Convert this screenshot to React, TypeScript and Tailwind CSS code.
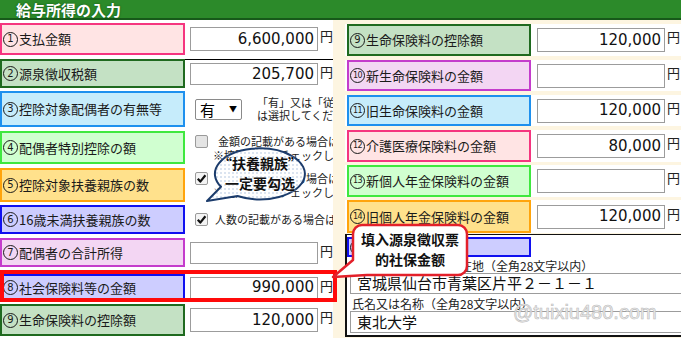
import React from 'react';

type Tone = string;

function Num({ n }: { n: number }) {
  const two = n > 9;
  return (
    <span
      className={`inline-flex items-center justify-center w-[15px] h-[15px] shrink-0 rounded-full border border-[#1a1a1a] mr-[1px] leading-none font-['DejaVu_Sans',sans-serif] ${two ? 'text-[8px] tracking-[-0.6px]' : 'text-[10px]'}`}
    >
      {n}
    </span>
  );
}

function Label({ tone, w = 'w-[185px]', n, children }: { tone: Tone; w?: string; n: number; children: React.ReactNode }) {
  return (
    <div className={`${w} h-full shrink-0 border-2 flex items-center pl-[1px] text-[13px] text-[#1a1a1a] whitespace-nowrap ${tone}`}>
      <Num n={n} />
      {children}
    </div>
  );
}

function Amount({ value = '', h = 'h-[24px]' }: { value?: string; h?: string }) {
  return (
    <div className="flex items-start">
      <div className={`w-[128px] ${h} bg-white border border-[#9c9c9c] flex items-center justify-end pr-[3px] font-['DejaVu_Sans',sans-serif] text-[15px] text-[#111]`}>
        {value}
      </div>
      <span className="ml-[2px] mt-[1px] text-[13px] leading-[16px] text-[#222]">円</span>
    </div>
  );
}

function Check({ checked }: { checked?: boolean }) {
  return (
    <div className={`w-[13px] h-[13px] shrink-0 border border-[#9a9a9a] rounded-[2px] flex items-center justify-center ${checked ? 'bg-[#f4f4f4]' : 'bg-[#e4e4e4]'}`}>
      {checked && (
        <svg width="11" height="11" viewBox="0 0 11 11">
          <path d="M1.8 5.8 L4.3 8.6 L9.4 2.2" fill="none" stroke="#111" strokeWidth="2.2" strokeLinejoin="round" />
        </svg>
      )}
    </div>
  );
}

const tones = {
  pink: 'bg-[#ffe4e4] border-[#f5357f]',
  dgreen: 'bg-[#c4e1c4] border-[#1f6a1f]',
  blue: 'bg-[#c6ecfb] border-[#1e90ee]',
  lgreen: 'bg-[#d0ffd0] border-[#3fe83f]',
  orange: 'bg-[#ffe18c] border-[#ffa40c]',
  violet: 'bg-[#cdcdff] border-[#1010f0]',
  magenta: 'bg-[#f3d6f3] border-[#c43ccc]',
};

export default function App() {
  return (
    <div className="relative w-[681px] h-[338px] overflow-hidden bg-[#fdf5e1] font-['Noto_Sans_CJK_JP','Noto_Sans',sans-serif]">
      {/* header */}
      <div className="h-[20px] bg-[#2c8a2a] border-b-2 border-[#17591a] flex items-center pl-[16px]">
        <span className="text-[15px] font-bold text-white leading-none [text-shadow:0_0_2px_#0d4d10]">給与所得の入力</span>
      </div>

      <div className="flex">
        {/* left panel */}
        <div className="w-[333px] h-[318px] bg-white flex flex-col overflow-hidden">
          <div className="mt-[3px] h-[32px] flex">
            <Label n={1} tone={tones.pink}>支払金額</Label>
            <div className="flex-1 flex items-center pl-[5px]"><Amount value="6,600,000" /></div>
          </div>
          <div className="mt-[4px] h-[29px] flex">
            <Label n={2} tone={tones.dgreen}>源泉徴収税額</Label>
            <div className="flex-1 flex items-center pl-[5px] border-t border-black"><Amount value="205,700" h="h-[22px]" /></div>
          </div>
          <div className="mt-[3px] h-[36px] flex">
            <Label n={3} tone={tones.blue}>控除対象配偶者の有無等</Label>
            <div className="flex-1 min-w-0 flex items-center pl-[10px] whitespace-nowrap overflow-hidden">
              <div className="w-[47px] h-[21px] shrink-0 bg-white border border-[#8a8a8a] rounded-[2px] flex items-center justify-between px-[4px]">
                <span className="text-[15px] leading-none">有</span>
                <span className="text-[8px] leading-none">▼</span>
              </div>
              <div className="ml-[15px] text-[11px] leading-[13px] text-[#222]">
                <div>「有」又は「従有」を選択</div>
                <div>は選択してください。</div>
              </div>
            </div>
          </div>
          <div className="mt-[4px] h-[33px] flex">
            <Label n={4} tone={tones.lgreen}>配偶者特別控除の額</Label>
            <div className="flex-1 min-w-0 flex items-start pt-[3px] pl-[10px] whitespace-nowrap overflow-hidden">
              <div className="mt-[1px]"><Check /></div>
              <div className="ml-[10px] text-[11px] leading-[14px] text-[#222]">
                <div>金額の記載がある場合はチェック</div>
                <div className="-ml-[5px]">※控除の時はチェックしません</div>
              </div>
            </div>
          </div>
          <div className="mt-[4px] h-[34px] flex">
            <Label n={5} tone={tones.orange}>控除対象扶養親族の数</Label>
            <div className="flex-1 min-w-0 flex items-start pt-[3px] pl-[10px] whitespace-nowrap overflow-hidden">
              <div className="mt-[1px]"><Check checked /></div>
              <div className="ml-[10px] text-[11px] leading-[14px] text-[#222]">
                <div>人数の記載がある場合はチェック</div>
                <div className="-ml-[5px]">※控除の時はチェックしません</div>
              </div>
            </div>
          </div>
          <div className="mt-[3px] h-[29px] flex">
            <Label n={6} tone={tones.violet}>16歳未満扶養親族の数</Label>
            <div className="flex-1 min-w-0 flex items-center pl-[10px] whitespace-nowrap overflow-hidden">
              <Check checked />
              <span className="ml-[7px] text-[11px] text-[#222]">人数の記載がある場合はチェック</span>
            </div>
          </div>
          <div className="mt-[4px] h-[29px] flex">
            <Label n={7} tone={tones.magenta}>配偶者の合計所得</Label>
            <div className="flex-1 flex items-center pl-[5px]"><Amount h="h-[22px]" /></div>
          </div>
          <div className="mt-[7px] h-[27px] flex">
            <Label n={8} tone={tones.violet}>社会保険料等の金額</Label>
            <div className="flex-1 flex items-center pl-[5px]"><Amount value="990,000" h="h-[22px]" /></div>
          </div>
          <div className="mt-[3px] h-[32px] flex">
            <Label n={9} tone={tones.dgreen}>生命保険料の控除額</Label>
            <div className="flex-1 flex items-center pl-[5px]"><Amount value="120,000" /></div>
          </div>
        </div>

        {/* right panel */}
        <div className="ml-[12px] w-[336px] flex flex-col">
          <div className="mt-[4px] h-[32px] flex bg-white pl-[2px]">
            <Label n={9} w="w-[184px]" tone={tones.dgreen}>生命保険料の控除額</Label>
            <div className="flex items-center pl-[6px]"><Amount value="120,000" /></div>
          </div>
          <div className="mt-[4px] h-[31px] flex bg-white pl-[2px]">
            <Label n={10} w="w-[184px]" tone={tones.magenta}>新生命保険料の金額</Label>
            <div className="flex items-center pl-[6px]"><Amount /></div>
          </div>
          <div className="mt-[4px] h-[31px] flex bg-white pl-[2px]">
            <Label n={11} w="w-[184px]" tone={tones.blue}>旧生命保険料の金額</Label>
            <div className="flex items-center pl-[6px]"><Amount value="120,000" /></div>
          </div>
          <div className="mt-[4px] h-[32px] flex bg-white pl-[2px]">
            <Label n={12} w="w-[184px]" tone={tones.pink}>介護医療保険料の金額</Label>
            <div className="flex items-center pl-[6px]"><Amount value="80,000" /></div>
          </div>
          <div className="mt-[3px] h-[32px] flex bg-white pl-[2px]">
            <Label n={13} w="w-[184px]" tone={tones.lgreen}>新個人年金保険料の金額</Label>
            <div className="flex items-center pl-[6px]"><Amount /></div>
          </div>
          <div className="mt-[3px] h-[33px] flex bg-white pl-[2px]">
            <Label n={14} w="w-[184px]" tone={tones.orange}>旧個人年金保険料の金額</Label>
            <div className="flex items-center pl-[6px]"><Amount value="120,000" /></div>
          </div>

          {/* payer block */}
          <div className="mt-[1px] h-[103px] bg-white border-l-2 border-t border-b-2 border-[#111] flex flex-col overflow-hidden">
            <div className="mt-[2px] h-[20px] w-[184px] shrink-0">
              <Label n={15} w="w-[184px]" tone={tones.violet}>支払者</Label>
            </div>
            <div className="mt-[1px] h-[15px] pl-[5px] text-[12px] leading-[15px] text-[#222] whitespace-nowrap">支払者の住所又は所在地（全角28文字以内）</div>
            <div className="ml-[3px] w-[340px] h-[21px] shrink-0 border border-[#9c9c9c] flex items-center pl-[6px] text-[15px] text-[#111] whitespace-nowrap">宮城県仙台市青葉区片平２－１－１</div>
            <div className="mt-[2px] h-[15px] pl-[5px] text-[12px] leading-[15px] text-[#222] whitespace-nowrap">氏名又は名称（全角28文字以内）</div>
            <div className="ml-[3px] w-[340px] h-[22px] shrink-0 border border-[#9c9c9c] flex items-center pl-[6px] text-[15px] text-[#111]">東北大学</div>
          </div>
        </div>
      </div>

      {/* red highlight around row 8 */}
      <div className="absolute left-0 top-[270px] w-[337px] h-[32px] border-4 border-[#ff0a0a]" />

      {/* dotted speech bubble */}
      <svg className="absolute left-[200px] top-[140px]" width="112" height="66" viewBox="0 0 112 66">
        <defs>
          <pattern id="dots" width="4" height="4" patternUnits="userSpaceOnUse">
            <rect width="4" height="4" fill="#ffffff" />
            <circle cx="1" cy="1" r="0.7" fill="#9db4d6" />
          </pattern>
        </defs>
        <path d="M37.5 56 L7 61 L21 46.7 A45 25.5 0 1 1 37.5 56 Z" fill="url(#dots)" stroke="#1c3c6c" strokeWidth="2" strokeLinejoin="round" />
      </svg>
      <div className="absolute left-[213px] top-[153px] w-[94px] text-center text-[14px] font-bold leading-[20px] text-[#111] font-['Noto_Sans_CJK_SC',sans-serif] [text-shadow:0_0_2px_#fff]">
        <div>“扶養親族”</div>
        <div>一定要勾选</div>
      </div>

      {/* red callout */}
      <svg className="absolute left-[330px] top-[222px]" width="140" height="58" viewBox="0 0 140 58">
        <path d="M32 3 H128 A9 9 0 0 1 137 12 V44 A9 9 0 0 1 128 53 H37 L3 55 L23 38 V12 A9 9 0 0 1 32 3 Z" fill="#ffffff" stroke="#e3202a" strokeWidth="2.5" strokeLinejoin="round" />
      </svg>
      <div className="absolute left-[353px] top-[229px] w-[114px] text-center text-[14px] font-bold leading-[20px] text-[#111] font-['Noto_Sans_CJK_SC',sans-serif]">
        <div>填入源泉徵収票</div>
        <div>的社保金额</div>
      </div>

      {/* watermark */}
      <div className="absolute left-[513px] top-[300px] text-[20px] leading-[24px] font-['Liberation_Sans',sans-serif] text-[#ececec] [-webkit-text-stroke:0.6px_#bcbcbc]">
        @tuixiu480.com
      </div>
    </div>
  );
}
